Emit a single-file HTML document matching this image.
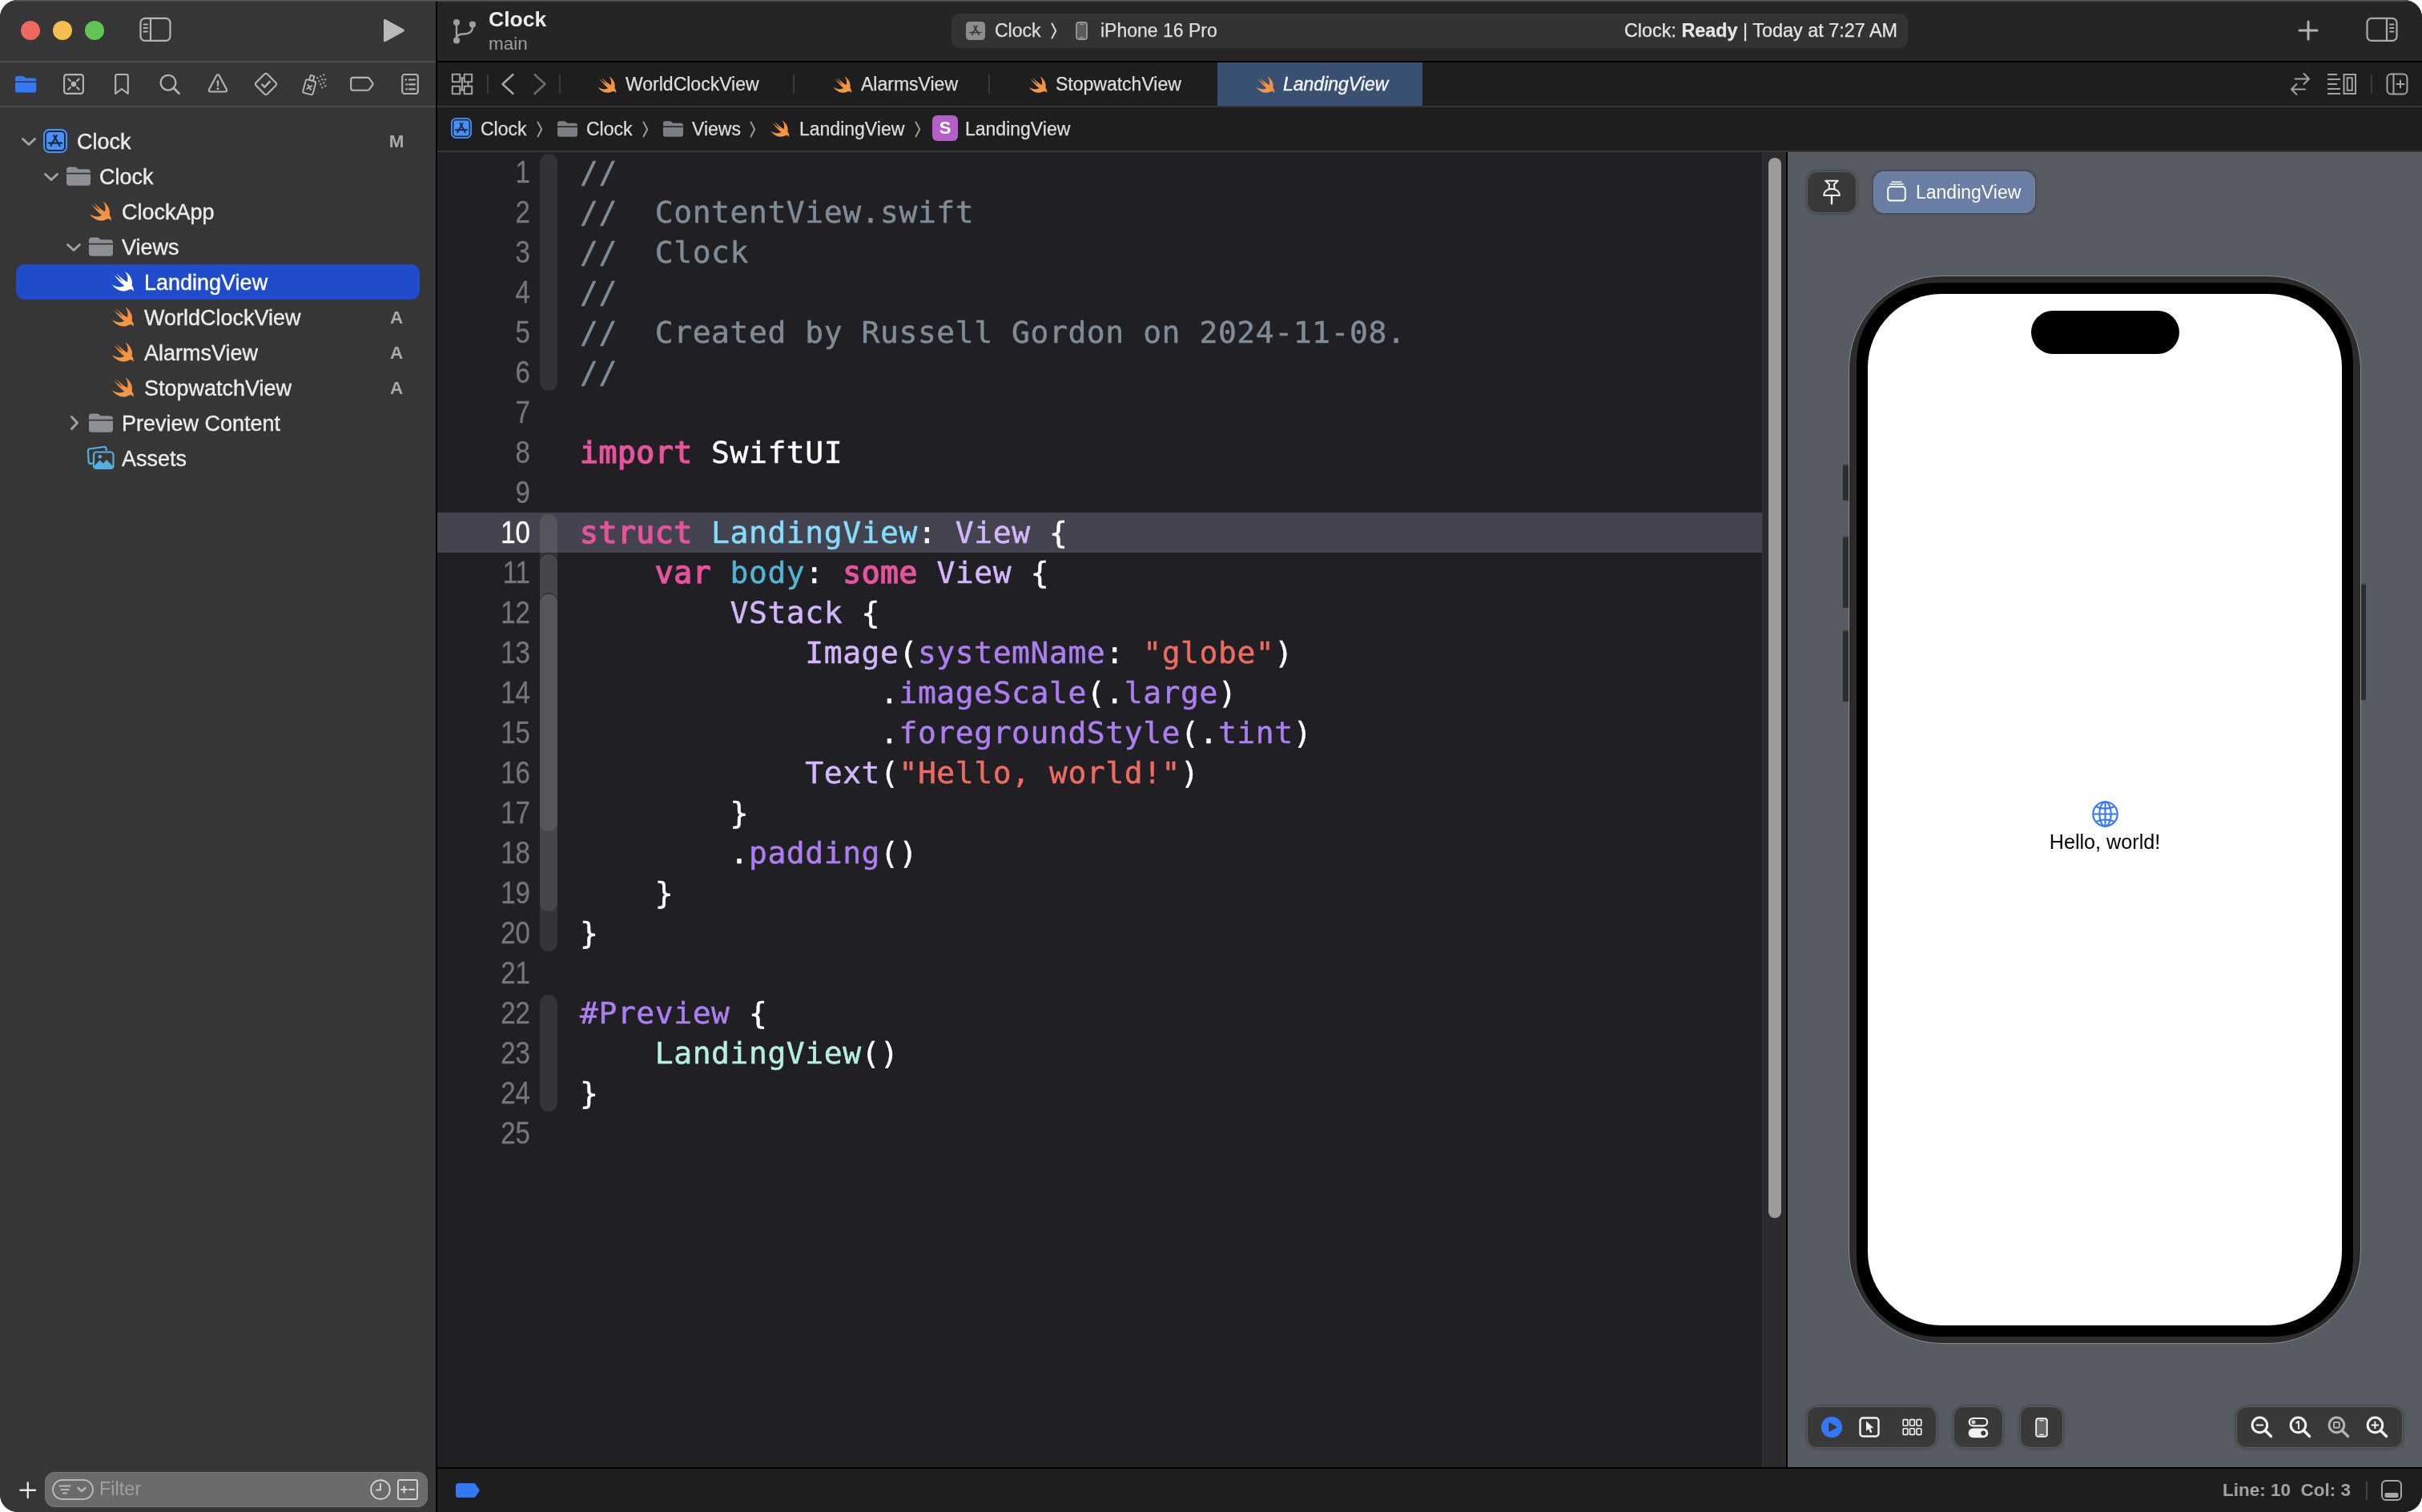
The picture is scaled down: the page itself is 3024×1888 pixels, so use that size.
<!DOCTYPE html>
<html lang="en">
<head>
<meta charset="utf-8">
<title>Clock — LandingView.swift</title>
<style>
*{box-sizing:border-box;margin:0;padding:0}
html,body{width:3024px;height:1888px;background:#fff;overflow:hidden}
body{font-family:"Liberation Sans",sans-serif;color:#e4e4e4;position:relative}
.abs{position:absolute}
#win{will-change:transform;position:absolute;left:0;top:0;width:3024px;height:1888px;border-radius:22px;overflow:hidden;background:#1e1e1e}
#side{left:0;top:0;width:544px;height:1888px;background:#363636}
#vsplit{left:544px;top:0;width:2px;height:1888px;background:#000}
#tbar{left:546px;top:0;width:2478px;height:76px;background:#252525}
#topline{left:0;top:0;width:3024px;height:2px;background:linear-gradient(#5e5e5e,#484848);opacity:.9}
#tline{left:546px;top:76px;width:2478px;height:2px;background:#000}
#tabs{left:546px;top:78px;width:2478px;height:54px;background:#1e1e1e}
#tabline{left:546px;top:132px;width:2478px;height:2px;background:#343434}
#crumbs{left:546px;top:134px;width:2478px;height:54px;background:#1e1e1e}
#crumbline{left:546px;top:188px;width:2478px;height:2px;background:#363636}
#editor{left:546px;top:190px;width:1654px;height:1642px;background:#1f1f24;overflow:hidden}
#scroll{left:2200px;top:190px;width:30px;height:1642px;background:#2b2b2f;border-left:1px solid #333337}
#thumb{left:2208px;top:197px;width:16px;height:1324px;border-radius:8px;background:#9b9b9b}
#psplit{left:2230px;top:190px;width:2px;height:1642px;background:#000}
#canvas{left:2232px;top:190px;width:792px;height:1642px;background:#575b64;overflow:hidden}
#bline{left:546px;top:1832px;width:2478px;height:2px;background:#000}
#bbar{left:546px;top:1834px;width:2478px;height:54px;background:#1e1e1e}
.sline{left:0;width:544px;height:2px;background:#4b4b4b}

.ic{position:absolute;overflow:visible}
.st{fill:none;stroke:#b4b4b4;stroke-width:2.1;stroke-linecap:round;stroke-linejoin:round}
.row{position:absolute;left:0;width:544px;height:44px;line-height:44px;font-size:27px;color:#ececec;white-space:nowrap;-webkit-text-stroke:.35px currentColor}
.row .t{position:absolute;top:1px}
.row .b{position:absolute;left:481px;width:28px;text-align:center;top:1px;font-weight:bold;font-size:22.5px;color:#a9a9a9;-webkit-text-stroke:0}
.chev{fill:none;stroke:#a2a2a2;stroke-width:3;stroke-linecap:round;stroke-linejoin:round}

.tx{position:absolute;white-space:nowrap;line-height:1}
.f23{font-size:23px;color:#dedede;-webkit-text-stroke:.25px currentColor}
.g{fill:none;stroke:#a3a3a3;stroke-width:2;stroke-linecap:round;stroke-linejoin:round}
.vsep{position:absolute;width:2px;background:#3a3a3a}
.cr{fill:none;stroke:#9a9a9a;stroke-width:2;stroke-linecap:round;stroke-linejoin:round}

#code{position:absolute;left:0;top:0;width:1654px;height:1641px;font-family:"DejaVu Sans Mono","Liberation Mono",monospace;font-size:38px;letter-spacing:.56px;color:#fff;-webkit-text-stroke:.5px currentColor}
.ln{position:absolute;left:0;width:1654px;height:50px;line-height:50px;white-space:pre}
.ln .n{position:absolute;left:0;top:0;width:116px;letter-spacing:0;text-align:right;font-family:"Liberation Sans",sans-serif;font-size:38px;color:#76767a;transform:scaleX(.87);transform-origin:100% 50%;-webkit-text-stroke:.3px currentColor}
.ln .x{position:absolute;left:178px;top:0}
.hl{position:absolute;left:0;top:450px;width:1654px;height:50px;background:#434450}
.rb{position:absolute;left:128px;width:22px;border-radius:11px}
.k{color:#e6539d;-webkit-text-stroke:1.500px #e6539d}
.c{color:#7f8c98}
.td{color:#86dcfb}
.sy{color:#d4b6fa}
.od{color:#54b2d2}
.sf{color:#ad7ef0}
.s{color:#ee6b60}
.pc{color:#b6efdf}

.pbtn{position:absolute;height:52px;border-radius:13px;background:#393939;border:1px solid #5c5c5c;box-shadow:0 0 4px rgba(0,0,0,.4)}
.w{fill:none;stroke:#f2f2f2;stroke-width:2.200;stroke-linecap:round;stroke-linejoin:round}
.sb{position:absolute;background:linear-gradient(#5a5a5a 0,#2d2d2d 3px)}
</style>
</head>
<body>
<div id="win">
<div id="side" class="abs"></div>
<div class="abs sline" style="top:76px"></div>
<div class="abs sline" style="top:132px"></div>
<div id="vsplit" class="abs"></div>
<div id="tbar" class="abs"></div>
<div id="tline" class="abs"></div>
<div id="tabs" class="abs"></div>
<div id="tabline" class="abs"></div>
<div id="crumbs" class="abs"></div>
<div id="crumbline" class="abs"></div>
<div id="editor" class="abs">
<div id="code">
<div class="hl"></div>
<div class="rb" style="top:2px;height:296px;background:#323238"></div>
<div class="rb" style="top:452px;height:546px;background:#34343a"></div>
<div class="rb" style="top:452px;height:48px;background:#555560;border-radius:11px 11px 0 0"></div>
<div class="rb" style="top:502px;height:446px;background:#47464c;box-shadow:0 -2px 0 #2c2c31"></div>
<div class="rb" style="top:552px;height:296px;background:#56565b;box-shadow:0 -2px 0 #36363b"></div>
<div class="rb" style="top:1052px;height:146px;background:#34343a"></div>
<div class="ln" style="top:0px"><span class="n">1</span><span class="x"><span class="c">//</span></span></div>
<div class="ln" style="top:50px"><span class="n">2</span><span class="x"><span class="c">//  ContentView.swift</span></span></div>
<div class="ln" style="top:100px"><span class="n">3</span><span class="x"><span class="c">//  Clock</span></span></div>
<div class="ln" style="top:150px"><span class="n">4</span><span class="x"><span class="c">//</span></span></div>
<div class="ln" style="top:200px"><span class="n">5</span><span class="x"><span class="c">//  Created by Russell Gordon on 2024-11-08.</span></span></div>
<div class="ln" style="top:250px"><span class="n">6</span><span class="x"><span class="c">//</span></span></div>
<div class="ln" style="top:300px"><span class="n">7</span><span class="x"></span></div>
<div class="ln" style="top:350px"><span class="n">8</span><span class="x"><span class="k">import</span> SwiftUI</span></div>
<div class="ln" style="top:400px"><span class="n">9</span><span class="x"></span></div>
<div class="ln" style="top:450px"><span class="n" style="color:#fff">10</span><span class="x"><span class="k">struct</span> <span class="td">LandingView</span>: <span class="sy">View</span> {</span></div>
<div class="ln" style="top:500px"><span class="n">11</span><span class="x">    <span class="k">var</span> <span class="od">body</span>: <span class="k">some</span> <span class="sy">View</span> {</span></div>
<div class="ln" style="top:550px"><span class="n">12</span><span class="x">        <span class="sy">VStack</span> {</span></div>
<div class="ln" style="top:600px"><span class="n">13</span><span class="x">            <span class="sy">Image</span>(<span class="sf">systemName</span>: <span class="s">"globe"</span>)</span></div>
<div class="ln" style="top:650px"><span class="n">14</span><span class="x">                .<span class="sf">imageScale</span>(.<span class="sf">large</span>)</span></div>
<div class="ln" style="top:700px"><span class="n">15</span><span class="x">                .<span class="sf">foregroundStyle</span>(.<span class="sf">tint</span>)</span></div>
<div class="ln" style="top:750px"><span class="n">16</span><span class="x">            <span class="sy">Text</span>(<span class="s">"Hello, world!"</span>)</span></div>
<div class="ln" style="top:800px"><span class="n">17</span><span class="x">        }</span></div>
<div class="ln" style="top:850px"><span class="n">18</span><span class="x">        .<span class="sf">padding</span>()</span></div>
<div class="ln" style="top:900px"><span class="n">19</span><span class="x">    }</span></div>
<div class="ln" style="top:950px"><span class="n">20</span><span class="x">}</span></div>
<div class="ln" style="top:1000px"><span class="n">21</span><span class="x"></span></div>
<div class="ln" style="top:1050px"><span class="n">22</span><span class="x"><span class="sf">#Preview</span> {</span></div>
<div class="ln" style="top:1100px"><span class="n">23</span><span class="x">    <span class="pc">LandingView</span>()</span></div>
<div class="ln" style="top:1150px"><span class="n">24</span><span class="x">}</span></div>
<div class="ln" style="top:1200px"><span class="n">25</span><span class="x"></span></div>
</div>
</div>
<div id="scroll" class="abs"></div>
<div id="thumb" class="abs"></div>
<div id="psplit" class="abs"></div>
<div id="canvas" class="abs"></div>
<div id="bline" class="abs"></div>
<div id="bbar" class="abs"></div>
<div id="topline" class="abs"></div>
<svg width="0" height="0" style="position:absolute"><defs>
<linearGradient id="sg" x1="0" y1="0" x2="0" y2="1"><stop offset="0" stop-color="#f0883a"/><stop offset="1" stop-color="#f39a48"/></linearGradient>
<symbol id="swift" viewBox="2.4 3.2 18.5 17.3"><path d="M13.543 3.41c4.114 2.47 6.545 7.162 5.549 11.131-.024.093-.05.181-.076.272l.002.001c2.062 2.538 1.5 5.258 1.236 4.745-1.072-2.086-3.066-1.568-4.088-1.043a6.803 6.803 0 0 1-.281.158l-.02.012-.002.002c-2.115 1.123-4.957 1.205-7.812-.022a12.568 12.568 0 0 1-5.64-4.838c.649.48 1.35.902 2.097 1.252 3.019 1.414 6.051 1.311 8.197-.002C9.651 12.73 7.101 9.67 5.146 7.191a10.628 10.628 0 0 1-1.005-1.384c2.34 2.142 6.038 4.83 7.365 5.576C8.69 8.408 6.208 4.743 6.324 4.86c4.436 4.47 8.528 6.996 8.528 6.996.154.085.27.154.36.213.085-.215.16-.437.224-.668.708-2.588-.09-5.548-1.893-7.992z"/></symbol>
<symbol id="folder" viewBox="0 0 30 24"><path d="M0 4.2C0 1.6 1.2.4 3.6.4h6.2c1.3 0 2.100.3 3 1.200l1 .9c.6.5 1.100.7 2 .7h10.400C28.800 3.200 30 4.400 30 6.800V7.800H0z"/><path d="M0 9.600h30v10.600c0 2.400-1.200 3.600-3.600 3.600H3.600C1.200 23.800 0 22.600 0 20.200z"/></symbol>
<symbol id="chevd" viewBox="0 0 20 12"><path class="chev" d="M2.500 2.500 10 9.500 17.500 2.500"/></symbol>
<symbol id="chevr" viewBox="0 0 12 20"><path class="chev" d="M2.500 2.500 9.500 10 2.500 17.500"/></symbol>
<symbol id="proj" viewBox="0 0 30 30"><rect x="1" y="1" width="28" height="28" rx="6.500" fill="#1d2b44" stroke="#4b92f7" stroke-width="2"/><rect x="4" y="4" width="22" height="22" rx="3.500" fill="#4a8ff4"/><g fill="none" stroke="#1c2a45" stroke-width="2.200" stroke-linecap="round"><path d="M16.800 8.200 9.400 21"/><path d="M13.200 8.200 20.600 21"/><path d="M6.800 17.600H23.200"/></g></symbol>
</defs></svg>

<!-- traffic lights -->
<div class="abs" style="left:26px;top:26px;width:24px;height:24px;border-radius:50%;background:#ec6a5e"></div>
<div class="abs" style="left:66px;top:26px;width:24px;height:24px;border-radius:50%;background:#f4bf4f"></div>
<div class="abs" style="left:106px;top:26px;width:24px;height:24px;border-radius:50%;background:#61c554"></div>
<svg class="ic" style="left:174px;top:21px" width="40" height="32" viewBox="0 0 40 32"><g class="st" style="stroke-width:2.200"><rect x="1.500" y="1.800" width="37" height="28" rx="5.500"/><path d="M14 2v28"/><path d="M5.500 9.500h4.500M5.500 14h4.500M5.500 18.500h4.500" style="stroke-width:1.800"/></g></svg>
<svg class="ic" style="left:478px;top:23px" width="28" height="30" viewBox="0 0 28 30"><path d="M1 2.600C1 1.200 2.300.500 3.500 1.200L26 13.600c1.200.700 1.200 2.200 0 2.900L3.500 28.900C2.300 29.600 1 28.900 1 27.500z" fill="#b9b9b9"/></svg>
<!-- navigator icons -->
<svg class="ic" style="left:18.800px;top:93.800px;fill:#3478f6" width="26.500" height="22.400"><use href="#folder"/></svg>
<svg class="ic" style="left:78px;top:91px" width="28" height="28" viewBox="0 0 28 28"><g class="st"><rect x="2.100" y="2.100" width="23.800" height="23.800" rx="3.200"/><path d="M7.300 7.500l2.600 2.600M20.700 7.500l-2.600 2.600M7.300 20.700l2.600-2.600M20.700 20.700l-2.600-2.600"/></g><circle cx="14" cy="14.100" r="3.300" fill="#b4b4b4"/></svg>
<svg class="ic" style="left:142px;top:91px" width="20" height="28" viewBox="0 0 20 28"><path class="st" d="M2.200 4a2 2 0 0 1 2-2h11.600a2 2 0 0 1 2 2v22L10 20 2.200 26z"/></svg>
<svg class="ic" style="left:198px;top:91px" width="28" height="28" viewBox="0 0 28 28"><g class="st" style="stroke-width:2.300"><circle cx="12" cy="12.200" r="9.400"/><path d="M18.900 19.100l6.600 6.600" style="stroke-width:2.800"/></g></svg>
<svg class="ic" style="left:258px;top:90px" width="28" height="28" viewBox="0 0 28 28"><path class="st" d="M12.500 4a1.800 1.800 0 0 1 3 0l9.500 17.800a1.800 1.800 0 0 1-1.600 2.700H4.600a1.800 1.800 0 0 1-1.600-2.700z"/><path d="M12.600 10.500h2.800l-.6 7.400h-1.600z" fill="#b4b4b4"/><circle cx="14" cy="20.700" r="1.500" fill="#b4b4b4"/></svg>
<svg class="ic" style="left:317px;top:90px" width="30" height="30" viewBox="0 0 30 30"><g class="st"><path d="M13.300 2.600a2.400 2.400 0 0 1 3.400 0l10.700 10.700a2.400 2.400 0 0 1 0 3.400L16.700 27.400a2.400 2.400 0 0 1-3.400 0L2.600 16.700a2.400 2.400 0 0 1 0-3.400z"/><path d="M10.200 15.500l3.300 3.300 6.300-6.900" style="stroke-width:2.400"/></g></svg>
<svg class="ic" style="left:376px;top:90px" width="32" height="30" viewBox="0 0 32 30"><g class="st" style="stroke-width:1.900"><g transform="translate(.8 0) rotate(15 9.500 18)"><rect x="3.200" y="10.200" width="12.800" height="17.200" rx="2.400"/><rect x="7.300" y="4" width="4.800" height="6.200"/><path d="M7.300 16.600l4.800 4.800M12.100 16.600l-4.800 4.800"/></g></g><g fill="#b4b4b4"><rect x="19.300" y="6.300" width="2" height="2"/><rect x="23.300" y="4.300" width="2" height="2"/><rect x="27.300" y="2.300" width="2" height="2"/><rect x="21.300" y="10.300" width="2" height="2"/><rect x="25.300" y="8.300" width="2" height="2"/><rect x="29.300" y="8.300" width="2" height="2"/><rect x="23.300" y="14.300" width="2" height="2"/><rect x="27.300" y="12.300" width="2" height="2"/><rect x="25.300" y="18.300" width="2" height="2"/><rect x="29.300" y="16.300" width="2" height="2"/></g></svg>
<svg class="ic" style="left:436px;top:95px" width="32" height="20" viewBox="0 0 32 20"><path class="st" d="M2.200 4.400a2.500 2.500 0 0 1 2.500-2.500h18.300a2.500 2.500 0 0 1 2 1l4.200 5.700a2 2 0 0 1 0 2.400l-4.200 5.700a2.500 2.500 0 0 1-2 1H4.700a2.500 2.500 0 0 1-2.500-2.500z"/></svg>
<svg class="ic" style="left:500px;top:91px" width="24" height="28" viewBox="0 0 24 28"><g class="st"><rect x="2.200" y="2" width="19.600" height="24" rx="3"/><path d="M10.800 8.500h7.200M10.800 14.400h7.200M10.800 20.300h7.200" style="stroke-width:2.200"/><path d="M6.400 8.500h.6M7.400 14.400h.6M7.400 20.300h.6" style="stroke-width:2.200"/></g></svg>
<!-- file tree -->
<div class="abs" style="left:20px;top:330px;width:504px;height:44px;border-radius:11px;background:#204ccb"></div>
<div class="row" style="top:154px"><svg class="ic" style="left:26px;top:17px" width="20" height="12"><use href="#chevd"/></svg><svg class="ic" style="left:54px;top:7px" width="30" height="30"><use href="#proj"/></svg><span class="t" style="left:96px">Clock</span><span class="b">M</span></div>
<div class="row" style="top:198px"><svg class="ic" style="left:54px;top:17px" width="20" height="12"><use href="#chevd"/></svg><svg class="ic" style="left:83px;top:10px;fill:#8c8f93" width="30" height="24"><use href="#folder"/></svg><span class="t" style="left:124px">Clock</span></div>
<div class="row" style="top:242px"><svg class="ic" style="left:111px;top:9px;fill:url(#sg)" width="29" height="26"><use href="#swift"/></svg><span class="t" style="left:152px">ClockApp</span></div>
<div class="row" style="top:286px"><svg class="ic" style="left:82px;top:17px" width="20" height="12"><use href="#chevd"/></svg><svg class="ic" style="left:111px;top:10px;fill:#8c8f93" width="30" height="24"><use href="#folder"/></svg><span class="t" style="left:152px">Views</span></div>
<div class="row" style="top:330px;color:#fff"><svg class="ic" style="left:139px;top:9px;fill:#fff" width="29" height="26"><use href="#swift"/></svg><span class="t" style="left:180px">LandingView</span></div>
<div class="row" style="top:374px"><svg class="ic" style="left:139px;top:9px;fill:url(#sg)" width="29" height="26"><use href="#swift"/></svg><span class="t" style="left:180px">WorldClockView</span><span class="b">A</span></div>
<div class="row" style="top:418px"><svg class="ic" style="left:139px;top:9px;fill:url(#sg)" width="29" height="26"><use href="#swift"/></svg><span class="t" style="left:180px">AlarmsView</span><span class="b">A</span></div>
<div class="row" style="top:462px"><svg class="ic" style="left:139px;top:9px;fill:url(#sg)" width="29" height="26"><use href="#swift"/></svg><span class="t" style="left:180px">StopwatchView</span><span class="b">A</span></div>
<div class="row" style="top:506px"><svg class="ic" style="left:87px;top:12px" width="12" height="20"><use href="#chevr"/></svg><svg class="ic" style="left:111px;top:10px;fill:#8c8f93" width="30" height="24"><use href="#folder"/></svg><span class="t" style="left:152px">Preview Content</span></div>
<div class="row" style="top:550px"><svg class="ic" style="left:109px;top:7px" width="34" height="30" viewBox="0 0 34 30"><g fill="none" stroke="#55b0e0" stroke-width="2.200" stroke-linejoin="round"><path d="M7 21.500l-2.300.400a2.600 2.600 0 0 1-3-2.100L.900 6.500a2.600 2.600 0 0 1 2.100-3l17.500-2.500a2.600 2.600 0 0 1 3 2.100l.500 2.900"/></g><rect x="8" y="7.500" width="24.500" height="20.500" rx="3.200" fill="#363636" stroke="#55b0e0" stroke-width="2.200"/><path d="M9.200 24.500l6.300-7 4.300 4.200 4.200-4.700 7.400 7.500v1a2 2 0 0 1-2 2H11.200a2 2 0 0 1-2-2z" fill="#55b0e0"/><circle cx="15.800" cy="13.300" r="2.300" fill="#55b0e0"/></svg><span class="t" style="left:152px">Assets</span></div>


<svg class="ic" style="left:563px;top:21px" width="34" height="36" viewBox="0 0 34 36"><g fill="none" stroke="#a0a0a0" stroke-width="2.400"><path d="M7 10.500V26"/><path d="M27 13c0 6-5 8.500-11 8.500-4.500 0-8 .5-9 4.500"/></g><g fill="#a0a0a0"><circle cx="7" cy="7" r="4"/><circle cx="7" cy="29.500" r="4"/><circle cx="27" cy="9.500" r="4"/></g></svg>
<div class="tx" style="left:610px;top:11px;font-size:26.500px;font-weight:bold;color:#ececec">Clock</div>
<div class="tx" style="left:610px;top:44px;font-size:22.500px;color:#9d9d9d">main</div>
<div class="abs" style="left:1188px;top:17px;width:1194px;height:43px;border-radius:10px;background:#333333"></div>
<svg class="ic" style="left:1206px;top:27px" width="24" height="23" viewBox="0 0 24 23"><rect width="24" height="23" rx="4.500" fill="#8d8d8d"/><g fill="none" stroke="#3a3a3a" stroke-width="1.700" stroke-linecap="round"><path d="M13.800 5.500 7.700 16.300"/><path d="M10.200 5.500 16.300 16.300"/><path d="M5 13.500H19"/></g></svg>
<div class="tx f23" style="left:1242px;top:27px">Clock</div>
<svg class="ic" style="left:1312px;top:28px" width="9" height="21" viewBox="0 0 9 21"><path d="M1.500 1.500 6.200 10.500 1.500 19.500" fill="none" stroke="#d8d8d8" stroke-width="2" stroke-linecap="round" stroke-linejoin="round"/></svg>
<svg class="ic" style="left:1343px;top:27px" width="15" height="23" viewBox="0 0 15 23"><rect x="1" y="1" width="13" height="21" rx="2.800" fill="#5a5a5a" stroke="#9a9a9a" stroke-width="1.800"/><path d="M5.500 3.300h4M5.500 19.700h4" stroke="#9a9a9a" stroke-width="1.300" stroke-linecap="round"/></svg>
<div class="tx f23" style="left:1374px;top:27px">iPhone 16 Pro</div>
<div class="tx f23" style="right:655px;top:27px;color:#e6e6e6;font-size:23.400px">Clock: <b>Ready</b> | Today at 7:27 AM</div>
<svg class="ic" style="left:2869px;top:25px" width="26" height="26" viewBox="0 0 26 26"><path d="M13 2v22M2 13h22" fill="none" stroke="#b2b2b2" stroke-width="3" stroke-linecap="round"/></svg>
<svg class="ic" style="left:2954px;top:21px" width="40" height="32" viewBox="0 0 40 32"><g class="st" style="stroke:#ababab;stroke-width:2.200"><rect x="1.500" y="1.800" width="37" height="28" rx="5.500"/><path d="M26 2v28"/><path d="M30 9.500h4.500M30 14h4.500M30 18.500h4.500" style="stroke-width:1.800"/></g></svg>


<svg class="ic" style="left:563px;top:91px" width="28" height="28" viewBox="0 0 28 28"><g class="g" stroke-linejoin="miter" style="stroke-linecap:butt"><rect x="1.800" y="1.800" width="9.500" height="9.500"/><rect x="16.700" y="1.800" width="9.500" height="9.500"/><rect x="1.800" y="16.700" width="9.500" height="9.500"/><rect x="16.700" y="16.700" width="9.500" height="9.500"/><path d="M11.300 6.500h5.400M11.300 21.500h5.400M21.500 11.300v5.400M14 6.500v15"/></g></svg>
<div class="vsep" style="left:608px;top:93px;height:24px"></div>
<svg class="ic" style="left:625px;top:91px" width="18" height="28" viewBox="0 0 18 28"><path d="M15.500 2 2.500 14l13 12" fill="none" stroke="#a8a8a8" stroke-width="2.400" stroke-linecap="round" stroke-linejoin="round"/></svg>
<svg class="ic" style="left:665px;top:91px" width="18" height="28" viewBox="0 0 18 28"><path d="M2.500 2l13 12-13 12" fill="none" stroke="#6d6d6d" stroke-width="2.400" stroke-linecap="round" stroke-linejoin="round"/></svg>
<div class="vsep" style="left:698px;top:93px;height:24px"></div>
<div class="vsep" style="left:990px;top:93px;height:24px"></div>
<div class="vsep" style="left:1234px;top:93px;height:24px"></div>
<div class="abs" style="left:1520px;top:78px;width:256px;height:54px;background:#3a5073"></div>
<svg class="ic" style="left:746px;top:95px;fill:url(#sg)" width="24" height="22"><use href="#swift"/></svg>
<div class="tx f23" style="left:781px;top:94px">WorldClockView</div>
<svg class="ic" style="left:1040px;top:95px;fill:url(#sg)" width="24" height="22"><use href="#swift"/></svg>
<div class="tx f23" style="left:1075px;top:94px">AlarmsView</div>
<svg class="ic" style="left:1284px;top:95px;fill:url(#sg)" width="24" height="22"><use href="#swift"/></svg>
<div class="tx f23" style="left:1318px;top:94px">StopwatchView</div>
<svg class="ic" style="left:1568px;top:95px;fill:url(#sg)" width="24" height="22"><use href="#swift"/></svg>
<div class="tx f23" style="left:1602px;top:94px;font-style:italic;color:#f4f4f4;-webkit-text-stroke:.4px #f4f4f4">LandingView</div>
<svg class="ic" style="left:2858px;top:90px" width="28" height="30" viewBox="0 0 28 30"><g class="g"><path d="M7.500 8.500h17.500M18.500 2l6.500 6.500-6.500 6.500"/><path d="M20 21.500H3M9.500 15 3 21.500 9.500 28"/></g></svg>
<svg class="ic" style="left:2905px;top:91px" width="38" height="28" viewBox="0 0 38 28"><g class="g" style="stroke-linecap:butt;stroke-linejoin:miter"><path d="M1 2h12M1 8h16M1 14h12M1 20h16M1 26h16"/><rect x="21.500" y="2" width="14.500" height="24"/><rect x="25.700" y="6.200" width="6.100" height="15.600"/></g></svg>
<div class="vsep" style="left:2960px;top:93px;height:24px"></div>
<svg class="ic" style="left:2979px;top:91px" width="28" height="28" viewBox="0 0 28 28"><g class="g"><rect x="1.500" y="1.500" width="25" height="25" rx="5"/><path d="M9.500 1.500v25"/><path d="M13.500 14h9M18 9.500v9"/></g></svg>


<svg class="ic" style="left:563px;top:147px" width="26" height="26"><use href="#proj"/></svg>
<div class="tx f23" style="left:600px;top:150px">Clock</div>
<svg class="ic" style="left:670px;top:151px" width="9" height="21" viewBox="0 0 9 21"><path class="cr" d="M1.500 1.500 6.200 10.500 1.500 19.500"/></svg>
<svg class="ic" style="left:696px;top:151px;fill:#7c7f83" width="25" height="20"><use href="#folder"/></svg>
<div class="tx f23" style="left:732px;top:150px">Clock</div>
<svg class="ic" style="left:802px;top:151px" width="9" height="21" viewBox="0 0 9 21"><path class="cr" d="M1.500 1.500 6.200 10.500 1.500 19.500"/></svg>
<svg class="ic" style="left:828px;top:151px;fill:#7c7f83" width="25" height="20"><use href="#folder"/></svg>
<div class="tx f23" style="left:864px;top:150px">Views</div>
<svg class="ic" style="left:936px;top:151px" width="9" height="21" viewBox="0 0 9 21"><path class="cr" d="M1.500 1.500 6.200 10.500 1.500 19.500"/></svg>
<svg class="ic" style="left:962px;top:150px;fill:url(#sg)" width="24" height="22"><use href="#swift"/></svg>
<div class="tx f23" style="left:998px;top:150px">LandingView</div>
<svg class="ic" style="left:1142px;top:151px" width="9" height="21" viewBox="0 0 9 21"><path class="cr" d="M1.500 1.500 6.200 10.500 1.500 19.500"/></svg>
<div class="abs" style="left:1164px;top:144px;width:32px;height:32px;border-radius:6px;background:#b45fc8;color:#fff;font-weight:bold;font-size:22px;line-height:32px;text-align:center">S</div>
<div class="tx f23" style="left:1205px;top:150px">LandingView</div>


<!-- preview canvas content (absolute in window coords) -->
<div class="pbtn" style="left:2256px;top:214px;width:62px"></div>
<svg class="ic" style="left:2274px;top:223px" width="26" height="34" viewBox="0 0 26 34"><g class="w" style="stroke-width:2"><path d="M5.300 2.800h15.400l-4.700 4.500.6 6.100c3.600 1.100 6 3.800 6.300 7.600H3.100c.3-3.800 2.700-6.500 6.300-7.600l.6-6.100z"/><path d="M9.400 13.400c2.400-.700 4.800-.700 7.200 0"/><path d="M13 21v10.200" style="stroke-width:2.400"/></g></svg>
<div class="pbtn" style="left:2339px;top:214px;width:202px;background:#6a7ea5;border-color:#7588ae"></div>
<svg class="ic" style="left:2356px;top:226px" width="24" height="26" viewBox="0 0 24 26"><g class="w" style="stroke:#fff;stroke-width:2"><rect x="1.200" y="7.200" width="21.600" height="17.300" rx="3.200"/><path d="M3.800 4h16.400" style="stroke-width:1.600"/><path d="M6 1.200h12" style="stroke-width:1.500"/></g></svg>
<div class="tx" style="left:2392px;top:229px;font-size:23px;color:#fff">LandingView</div>
<!-- phone -->
<div class="sb" style="left:2301px;top:579px;width:8px;height:46px"></div>
<div class="sb" style="left:2301px;top:669px;width:8px;height:90px"></div>
<div class="sb" style="left:2301px;top:786px;width:8px;height:90px"></div>
<div class="sb" style="left:2947px;top:728px;width:7px;height:146px"></div>
<div class="abs" style="left:2308px;top:344px;width:640px;height:1334px;border-radius:117px;background:#2b2b2b;border:1.500px solid #8a8c90"></div>
<div class="abs" style="left:2318px;top:353px;width:620px;height:1316px;border-radius:99px;background:#000"></div>
<div class="abs" style="left:2332px;top:366.500px;width:592px;height:1288px;border-radius:92px;background:#fff"></div>
<div class="abs" style="left:2535.500px;top:387.500px;width:185px;height:54.500px;border-radius:28px;background:#000"></div>
<svg class="ic" style="left:2611px;top:999px" width="35" height="35" viewBox="0 0 35 35"><g fill="none" stroke="#3478f6" stroke-width="2.100"><circle cx="17.500" cy="17.500" r="15.200"/><ellipse cx="17.500" cy="17.500" rx="7.200" ry="15.200"/><path d="M17.500 2.300v30.400M2.300 17.500h30.400"/><path d="M5.800 7.800c6.500 3.700 16.900 3.700 23.400 0M5.800 27.200c6.500-3.700 16.900-3.700 23.400 0"/></g></svg>
<div class="tx" style="left:2528px;width:200px;text-align:center;top:1039px;font-size:25.200px;color:#000">Hello, world!</div>
<!-- preview toolbar -->
<div class="pbtn" style="left:2256px;top:1756px;width:162px"></div>
<div class="pbtn" style="left:2439px;top:1756px;width:62px"></div>
<div class="pbtn" style="left:2522px;top:1756px;width:54px"></div>
<div class="pbtn" style="left:2792px;top:1756px;width:208px"></div>
<svg class="ic" style="left:2274px;top:1769px" width="26" height="26" viewBox="0 0 26 26"><circle cx="13" cy="13" r="13.100" fill="#3478f6"/><path d="M9.300 8.300c0-.800.800-1.200 1.500-.800l7.700 4.600c.700.400.700 1.400 0 1.800l-7.700 4.600c-.700.400-1.500 0-1.500-.800z" fill="#393939"/></svg>
<svg class="ic" style="left:2321px;top:1769px" width="26" height="26" viewBox="0 0 26 26"><rect class="w" x="1.500" y="1.500" width="23" height="23" rx="3.500" style="stroke-width:2.400"/><path d="M9 5.500v12.300l3-2.600 2.200 5 2.300-1-2.200-4.900 4-.3z" fill="#f2f2f2"/></svg>
<svg class="ic" style="left:2375px;top:1771px" width="25" height="22" viewBox="0 0 25 22"><g class="w" style="stroke-width:1.600"><rect x="1.200" y="1.600" width="5.800" height="7.600" rx="1"/><rect x="9.600" y="1.600" width="5.800" height="7.600" rx="1"/><rect x="18" y="1.600" width="5.800" height="7.600" rx="1"/><rect x="1.200" y="12.800" width="5.800" height="7.600" rx="1"/><rect x="9.600" y="12.800" width="5.800" height="7.600" rx="1"/><rect x="18" y="12.800" width="5.800" height="7.600" rx="1"/></g></svg>
<svg class="ic" style="left:2457px;top:1769px" width="26" height="27" viewBox="0 0 26 27"><rect x="1.800" y="2" width="22.400" height="9.400" rx="4.700" fill="none" stroke="#f2f2f2" stroke-width="2.200"/><circle cx="7" cy="6.700" r="2.500" fill="#d0d0d0"/><rect x=".700" y="14.600" width="24.600" height="11.600" rx="5.800" fill="#f2f2f2"/><circle cx="19.300" cy="20.400" r="3" fill="#383838"/></svg>
<svg class="ic" style="left:2541px;top:1770px" width="16" height="25" viewBox="0 0 16 25"><rect x="1.200" y="1.200" width="13.600" height="22.600" rx="2.800" fill="#686868" stroke="#f2f2f2" stroke-width="1.900"/><path d="M5.800 3.800h4.400M5.800 21.300h4.400" stroke="#f2f2f2" stroke-width="1.300" stroke-linecap="round"/></svg>
<svg class="ic" style="left:2809px;top:1767px" width="30" height="30" viewBox="0 0 30 30"><g class="w" style="stroke-width:3"><circle cx="12.400" cy="12.400" r="9.300"/><path d="M19.500 19.500l7 7" style="stroke-width:3.400"/><path d="M8.500 12.400h7.800" style="stroke-width:2"/></g></svg>
<svg class="ic" style="left:2857px;top:1767px" width="30" height="30" viewBox="0 0 30 30"><g class="w" style="stroke-width:3"><circle cx="12.400" cy="12.400" r="9.300"/><path d="M19.500 19.500l7 7" style="stroke-width:3.400"/><path d="M10.300 9.600l2.700-1.800v9.200" style="stroke-width:1.900"/></g></svg>
<svg class="ic" style="left:2905px;top:1767px" width="30" height="30" viewBox="0 0 30 30"><g class="w" style="stroke-width:3;stroke:#b2b2b2"><circle cx="12.400" cy="12.400" r="9.300"/><path d="M19.500 19.500l7 7" style="stroke-width:3.400"/><rect x="9" y="9" width="6.800" height="6.800" rx="1" style="stroke-width:2"/></g></svg>
<svg class="ic" style="left:2953px;top:1767px" width="30" height="30" viewBox="0 0 30 30"><g class="w" style="stroke-width:3"><circle cx="12.400" cy="12.400" r="9.300"/><path d="M19.500 19.500l7 7" style="stroke-width:3.400"/><path d="M8.500 12.400h7.800M12.400 8.500v7.800" style="stroke-width:2"/></g></svg>


<svg class="ic" style="left:23.500px;top:1850px" width="21.500" height="21.500" viewBox="0 0 24 24"><path d="M12 1.500v21M1.500 12h21" fill="none" stroke="#e8e8e8" stroke-width="2.600" stroke-linecap="round"/></svg>
<div class="abs" style="left:56px;top:1838px;width:478px;height:44px;border-radius:12px;background:#6b6b6b;border:1px solid #777"></div>
<svg class="ic" style="left:65px;top:1847px" width="52" height="26" viewBox="0 0 52 26"><g fill="none" stroke="#b8b8b8" stroke-width="1.900" stroke-linecap="round" stroke-linejoin="round"><rect x="1" y="1" width="50" height="24" rx="12"/><path d="M9.500 8.500h13M11.500 13h9M14 17.500h4" style="stroke-width:2.100"/><path d="M32.500 10.800l4.500 4.400 4.500-4.400" style="stroke-width:2.400"/></g></svg>
<div class="tx" style="left:124px;top:1848px;font-size:23.500px;color:#a0a0a0">Filter</div>
<svg class="ic" style="left:462px;top:1847px" width="26" height="26" viewBox="0 0 26 26"><g fill="none" stroke="#d4d4d4" stroke-width="1.900" stroke-linecap="round" stroke-linejoin="round"><circle cx="13" cy="13" r="11.800"/><path d="M13 6v7.500H8"/></g></svg>
<svg class="ic" style="left:496px;top:1847px" width="26" height="26" viewBox="0 0 26 26"><g fill="none" stroke="#d4d4d4" stroke-width="1.900" stroke-linecap="round"><rect x="1" y="1" width="24" height="24" rx="2"/><path d="M5 13h7M8.500 9.500v7M15 13h6" style="stroke-width:2.200"/></g></svg>
<svg class="ic" style="left:568px;top:1851px" width="32" height="20" viewBox="0 0 32 20"><path d="M1 4.500A3.500 3.500 0 0 1 4.500 1h18.500a3.500 3.500 0 0 1 2.900 1.500l4.200 6a2.600 2.600 0 0 1 0 3l-4.200 6a3.500 3.500 0 0 1-2.900 1.500H4.500A3.500 3.500 0 0 1 1 15.500z" fill="#3478f6"/></svg>
<div class="tx" style="left:2775px;top:1850px;font-size:22.500px;font-weight:bold;color:#a2a2a2;white-space:pre">Line: 10  Col: 3</div>
<div class="vsep" style="left:2954px;top:1850px;height:23px;background:#444"></div>
<svg class="ic" style="left:2972px;top:1847px" width="28" height="28" viewBox="0 0 28 28"><rect x="2" y="2" width="24" height="24" rx="5" fill="none" stroke="#a6a6a6" stroke-width="2"/><rect x="5.500" y="17" width="17" height="6" rx="1.800" fill="#a6a6a6"/></svg>

</div>
</body>
</html>
